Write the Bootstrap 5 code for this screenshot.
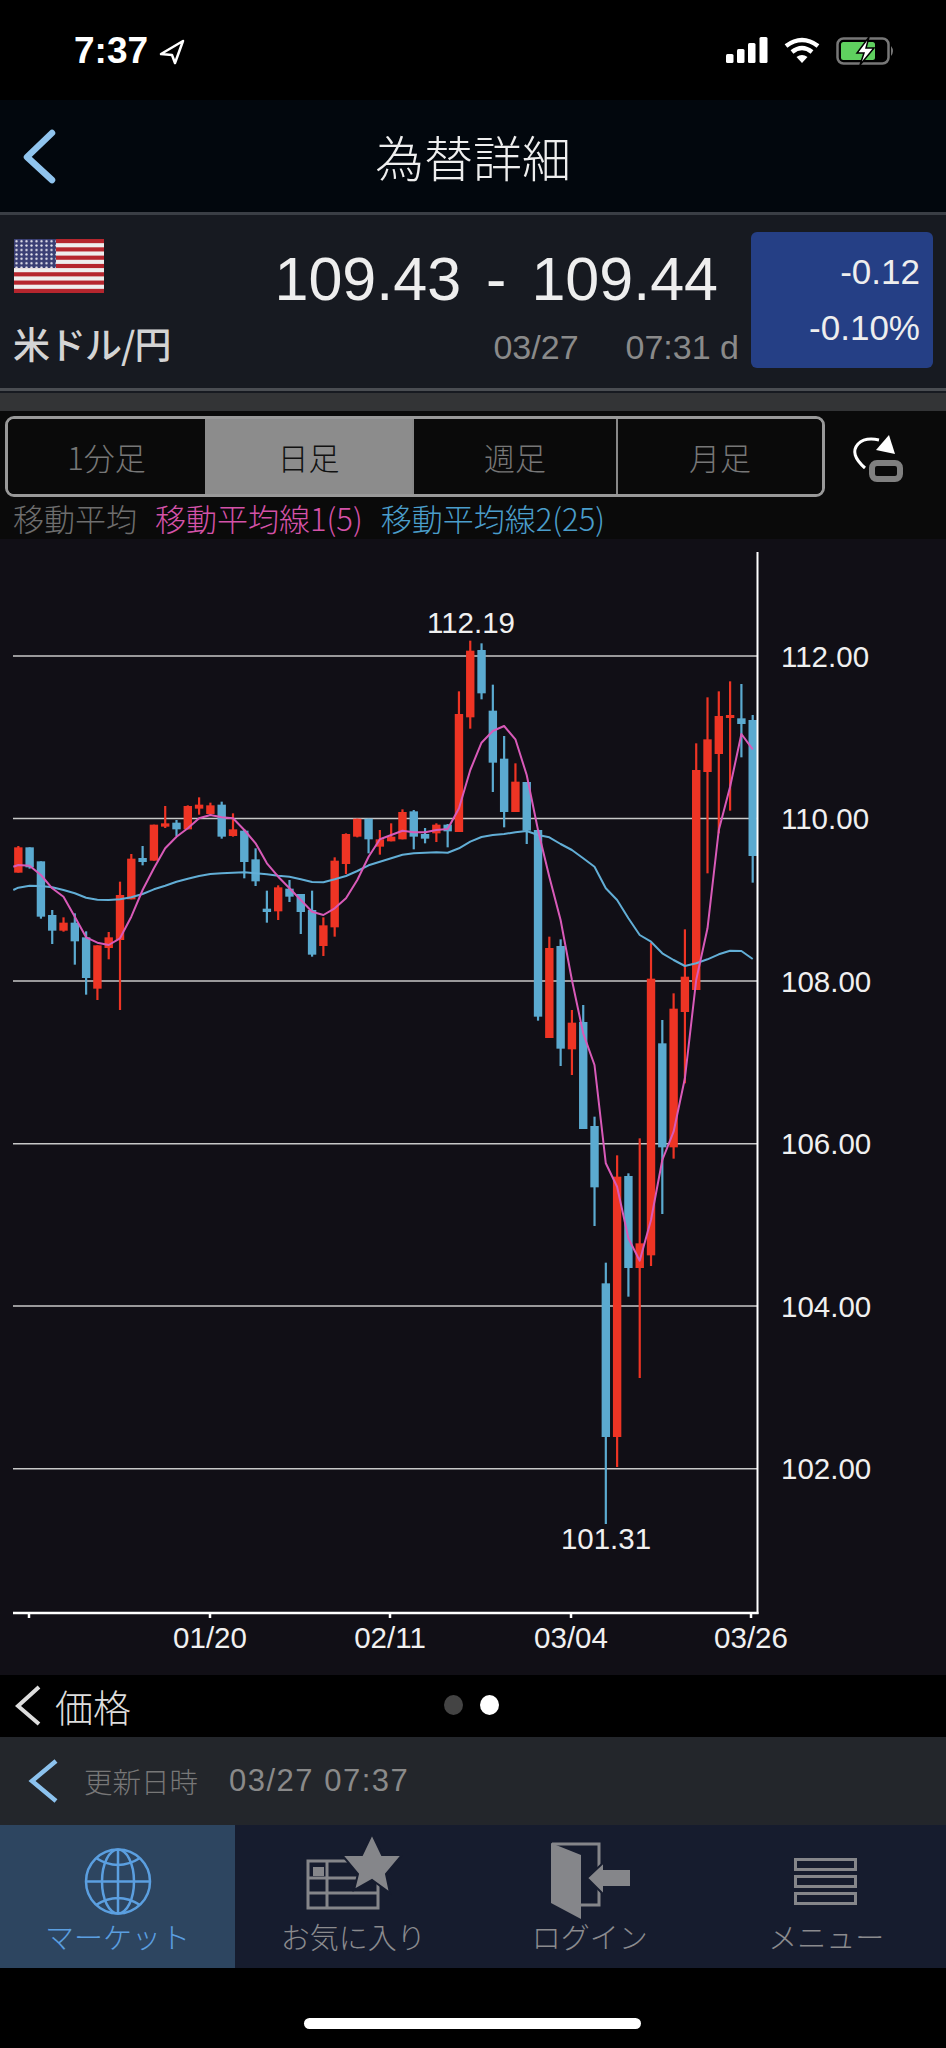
<!DOCTYPE html>
<html lang="ja">
<head>
    <meta charset="UTF-8">
    <meta name="viewport" content="width=device-width, initial-scale=1.0">
    <title>為替詳細</title>
    <link href="https://cdn.jsdelivr.net/npm/bootstrap@5.3.3/dist/css/bootstrap.min.css" rel="stylesheet">
    <script src="https://cdn.jsdelivr.net/npm/bootstrap@5.3.3/dist/js/bootstrap.bundle.min.js"></script>
    <style>
        html, body { background: #000; margin: 0; }
        body { width: 946px; height: 2048px; overflow: hidden; font-family: "Liberation Sans", "Noto Sans CJK JP", sans-serif; }
        svg { display: block; flex: none; }

        .status-bar { height: 100px; background: #000; padding: 37px 50px 0 74px; }
        .clock { font-size: 37px; line-height: 28px; font-weight: 700; color: #fff; }

        .title-bar { height: 115px; background: #02070d; border-bottom: 3px solid #3a3e45; padding-left: 21px; position: relative; }
        .page-title { position: absolute; left: 0; right: 0; top: 26px; text-align: center; font-size: 49px; line-height: 60px; color: #eee; font-weight: 300; font-family: "Noto Sans CJK JP", sans-serif; }

        .quote-row { height: 173px; background: #171a21; padding: 17px 13px 20px 14px; }
        .pair-col { width: 190px; }
        .pair-name { font-family: "Noto Sans CJK JP", sans-serif; font-size: 37px; line-height: 40px; font-weight: 500; color: #d4d4d4; margin-top: 30px; margin-left: -1px; white-space: nowrap; letter-spacing: -1px; }
        .flag-box { margin-top: 7px; }
        .price-line { font-size: 61px; line-height: 70px; color: #eee; margin-top: 12px; padding-right: 21px; gap: 25px; }
        .stamp-line { font-size: 34px; line-height: 40px; color: #8a8a8a; margin-top: 13px; gap: 47px; }
        .change-box { width: 182px; height: 136px; background: #253f85; border-radius: 6px; color: #eee; font-size: 35px; line-height: 56px; text-align: right; padding: 12px 13px 0 0; margin-left: 12px; }

        .rule-band { height: 23px; background: #333436; border-top: 3px solid #4a4d52; box-shadow: inset 0 2px 0 #171a21; }

        .tool-row { height: 128px; background: #0a0a0a; padding: 5px 0 0 5px; }
        .seg-wrap { display: grid; grid-template-columns: 197px 207px 204px 206px; width: 820px; height: 81px; border: 3px solid #999; border-radius: 9px; overflow: hidden; }
        .seg-btn { border: 0; border-radius: 0; padding: 0; background: #0a0a0a; color: #777; font-size: 31px; line-height: 1; font-family: "Noto Sans CJK JP", sans-serif; font-weight: 300; border-left: 2px solid #888; }
        .seg-btn:first-child { border-left: 0; }
        .seg-btn.picked { background: #8c8c8c; color: #111; border-left: 0; }
        .turn-icon { margin-left: 21px; }
        .legend-line { height: 42px; padding-left: 8px; gap: 18px; font-size: 31px; line-height: 40px; font-family: "Noto Sans CJK JP", sans-serif; font-weight: 300; white-space: nowrap; }
        .ma-grey { color: #6e6e6e; }
        .ma-pink { color: #d452a8; }
        .ma-blue { color: #4a9ecb; }

        .chart-box { height: 1136px; background: #110f16; }
        .axis-text { font-family: "Liberation Sans", sans-serif; font-size: 29.5px; fill: #f0f0f0; }

        .pager-row { height: 62px; background: #000; position: relative; padding-left: 15px; gap: 14px; }
        .pager-name { font-family: "Noto Sans CJK JP", sans-serif; font-size: 38px; line-height: 60px; color: #ddd; font-weight: 300; }
        .pager-dots { position: absolute; left: 444px; top: 20px; gap: 17px; }
        .pager-dots span { width: 19px; height: 20px; border-radius: 50%; background: #444; }
        .pager-dots span.now { background: #fff; }

        .update-row { height: 88px; background: #23262b; padding-left: 28px; }
        .update-label { font-family: "Noto Sans CJK JP", sans-serif; font-size: 28.5px; color: #777; font-weight: 300; margin-left: 26px; }
        .update-time { font-size: 31px; letter-spacing: 1.5px; color: #8a8a8a; margin-left: 31px; }

        .tab-bar { height: 143px; background: #161c2e; }
        .tab-item { width: 236.5px; height: 143px; padding-top: 3px; color: #8b8b8e; font-family: "Noto Sans CJK JP", sans-serif; font-size: 29px; line-height: 24px; font-weight: 300; white-space: nowrap; }
        .tab-item.picked { background: #2d4560; color: #5b9fe0; width: 235px; }

        .home-area { height: 80px; background: #000; padding-top: 50px; }
        .home-bar { width: 337px; height: 11px; border-radius: 6px; background: #fff; margin-left: 304px; }
    </style>
</head>
<body>
    <div class="status-bar d-flex justify-content-between">
        <div class="d-flex gap-2">
            <span class="clock">7:37</span>
            <svg width="30" height="28" viewBox="160 37 30 28" fill="none" stroke="#fff" stroke-width="2.5" stroke-linejoin="round"><path d="M187 41 L165 54 L176 55 L179 63 Z"/></svg>
        </div>
        <div class="d-flex gap-3">
            <svg width="42" height="27" viewBox="0 0 42 27" fill="#fff"><rect x="0" y="17" width="7.5" height="9" rx="1.5"/><rect x="11" y="12" width="7.5" height="14" rx="1.5"/><rect x="22" y="6" width="7.5" height="20" rx="1.5"/><rect x="33.5" y="0" width="8" height="26" rx="1.5"/></svg>
            <svg width="36" height="27" viewBox="0 0 36 27" fill="none" stroke="#fff" stroke-width="4.5"><path d="M2 9 Q18 -3 34 9"/><path d="M8 15 Q18 7 28 15"/><path d="M18 26 L12.5 20 Q18 16 23.5 20 Z" fill="#fff" stroke="none"/></svg>
            <svg width="60" height="28" viewBox="0 0 60 28"><rect x="1.5" y="1.5" width="51" height="25" rx="6" fill="none" stroke="#777" stroke-width="2.5"/><rect x="5" y="5" width="34" height="18" rx="2.5" fill="#5fd05f"/><path d="M55 9 Q59 14 55 19 Z" fill="#777"/><path d="M33 0 L21 16 L28 16 L24 28 L38 11 L30 11 Z" fill="#fff" stroke="#000" stroke-width="1.5"/></svg>
        </div>
    </div>

    <div class="title-bar d-flex align-items-start">
        <svg class="mt-4" width="36" height="60" viewBox="20 124 36 60" fill="none" stroke="#90c4ee" stroke-width="6.5" stroke-linecap="round" stroke-linejoin="round"><path d="M51 133 L26 157 L51 180"/></svg>
        <div class="page-title">為替詳細</div>
    </div>

    <div class="quote-row d-flex">
        <div class="pair-col">
            <svg class="flag-box" width="90" height="54" viewBox="0 0 90 54">
                <defs><pattern id="starDots" width="5" height="4.4" patternUnits="userSpaceOnUse"><circle cx="2.5" cy="2.2" r="1.2" fill="#e8e8f0"/></pattern></defs>
                <rect width="90" height="54" fill="#eee"/>
                <g id="flagStripes" fill="#b5262e"></g>
                <rect width="42" height="29" fill="#3a3f74"/>
                <rect width="42" height="29" fill="url(#starDots)"/>
            </svg>
            <div class="pair-name">米ドル/円</div>
        </div>
        <div class="flex-grow-1 text-end">
            <div class="price-line d-flex justify-content-end"><span>109.43</span><span>-</span><span>109.44</span></div>
            <div class="stamp-line d-flex justify-content-end"><span>03/27</span><span>07:31 d</span></div>
        </div>
        <div class="change-box"><div>-0.12</div><div>-0.10%</div></div>
    </div>

    <div class="rule-band"></div>

    <div class="tool-row">
        <div class="d-flex align-items-center">
            <div class="seg-wrap">
                <button type="button" class="btn seg-btn">1分足</button>
                <button type="button" class="btn seg-btn picked">日足</button>
                <button type="button" class="btn seg-btn">週足</button>
                <button type="button" class="btn seg-btn">月足</button>
            </div>
            <svg class="turn-icon" width="62" height="54" viewBox="850 428 62 54" fill="none">
                <path d="M869 466 Q853 452 862 442 Q869 435 883 438" stroke="#fff" stroke-width="3"/>
                <path d="M893 433 L880 448 L899 452 Z" fill="#fff"/>
                <rect x="876" y="461" width="28" height="16" rx="5" stroke="#808080" stroke-width="6"/>
            </svg>
        </div>
        <div class="legend-line d-flex align-items-center">
            <span class="ma-grey">移動平均</span>
            <span class="ma-pink">移動平均線1(5)</span>
            <span class="ma-blue">移動平均線2(25)</span>
        </div>
    </div>

    <div class="chart-box">
        <svg id="chart" width="946" height="1136" viewBox="0 539 946 1136"></svg>
    </div>

    <div class="pager-row d-flex align-items-center">
        <svg width="26" height="42" viewBox="14 1684 26 42" fill="none" stroke="#ddd" stroke-width="4"><path d="M38 1686 L17 1705 L38 1723"/></svg>
        <span class="pager-name">価格</span>
        <div class="pager-dots d-flex"><span></span><span class="now"></span></div>
    </div>

    <div class="update-row d-flex align-items-center">
        <svg width="30" height="48" viewBox="28 1756 30 48" fill="none" stroke="#8cc2ee" stroke-width="4.5"><path d="M56 1760 L32 1780 L56 1800"/></svg>
        <span class="update-label">更新日時</span>
        <span class="update-time">03/27 07:37</span>
    </div>

    <div class="tab-bar d-flex">
        <div class="tab-item picked d-flex flex-column align-items-center">
            <svg width="100" height="96" viewBox="68 1828 100 96" fill="none" stroke="#5b9fe0" stroke-width="2.5">
                <ellipse cx="118" cy="1881.5" rx="32" ry="32"/>
                <ellipse cx="118" cy="1881.5" rx="16" ry="32"/>
                <path d="M118 1849 V1914 M86 1881.5 H150 M96 1858 Q118 1872 140 1858 M96 1905 Q118 1891 140 1905"/>
            </svg>
            <span>マーケット</span>
        </div>
        <div class="tab-item d-flex flex-column align-items-center">
            <svg width="100" height="96" viewBox="305 1828 100 96">
                <g fill="none" stroke="#85868a" stroke-width="3">
                    <path d="M310 1861 H380 V1908 H310 Z M310 1878 H360 M310 1893 H380 M329 1861 V1908"/>
                </g>
                <rect x="315" y="1867" width="11" height="9" fill="#85868a"/>
                <path d="M374 1834 L384 1855 L404 1855 L388 1874 L392 1893 L374 1880 L356 1890 L360 1874 L344 1855 L364 1855 Z" fill="#85868a" stroke="#161c2e" stroke-width="2"/>
            </svg>
            <span>お気に入り</span>
        </div>
        <div class="tab-item d-flex flex-column align-items-center">
            <svg width="100" height="96" viewBox="541 1828 100 96">
                <path d="M553 1844 H600 V1905 H580" fill="none" stroke="#85868a" stroke-width="3"/>
                <path d="M552 1843 L582 1855 L582 1919 L552 1903 Z" fill="#85868a"/>
                <path d="M588 1878 L605 1862 L605 1869 L632 1869 L632 1887 L605 1887 L605 1895 Z" fill="#85868a" stroke="#161c2e" stroke-width="2"/>
            </svg>
            <span>ログイン</span>
        </div>
        <div class="tab-item d-flex flex-column align-items-center">
            <svg width="100" height="96" viewBox="778 1828 100 96" fill="none" stroke="#85868a" stroke-width="3">
                <rect x="797.5" y="1859.5" width="60" height="10"/>
                <rect x="797.5" y="1876.5" width="60" height="10"/>
                <rect x="797.5" y="1893.5" width="60" height="10"/>
            </svg>
            <span>メニュー</span>
        </div>
    </div>

    <div class="home-area"><div class="home-bar"></div></div>

    <script>
        document.addEventListener("DOMContentLoaded", () => {
            const NS = "http://www.w3.org/2000/svg";
            const chart = document.getElementById("chart");
            const RED = "#ee3424", BLUE = "#5baad0";

            function add(parent, tag, attrs, text) {
                const el = document.createElementNS(NS, tag);
                Object.entries(attrs).forEach(([k, v]) => el.setAttribute(k, v));
                if (text) el.textContent = text;
                parent.appendChild(el);
                return el;
            }

            // flag stripes
            const stripes = document.getElementById("flagStripes");
            for (let i = 0; i < 13; i += 2) add(stripes, "rect", { x: 0, y: i * 54 / 13, width: 90, height: 54 / 13 });

            // measurements were read off a 3x crop: real y = 600 + z / 3
            const Y = z => 600 + z / 3;
            const X = i => 18.33 + 11.298 * i;

            // r/b, wick top, body top, body bottom, wick bottom
            const candles = [
                ["r",738,742,818,818],["b",742,742,802,806],["b",784,784,950,956],["b",930,945,992,1032],["r",952,968,992,995],
                ["b",940,968,1024,1094],["b",994,1012,1134,1184],["r",1036,1036,1166,1200],["r",996,1012,1044,1078],["r",845,885,1020,1230],
                ["r",762,776,898,898],["b",738,774,786,796],["r",674,674,782,782],["r",618,670,680,684],["b",660,668,688,708],
                ["r",616,618,688,688],["r",592,614,626,644],["r",608,616,642,644],["b",605,614,710,716],["r",640,688,708,710],
                ["b",688,692,786,835],["b",745,778,844,858],["b",872,926,936,968],["r",856,862,934,960],["b",840,866,890,906],
                ["b",882,882,936,1002],["b",872,930,1064,1070],["r",952,976,1038,1068],["r",772,782,982,1010],["r",700,702,792,822],
                ["r",656,656,710,712],["b",656,656,718,760],["r",690,718,740,764],["r",670,710,724,724],["r",628,636,718,718],
                ["b",630,634,710,748],["b",684,702,716,730],["r",670,674,700,726],["b",672,674,694,742],["r",274,342,696,696],
                ["r",122,152,352,386],["b",130,150,280,298],["b",254,332,488,576],["b",408,476,636,682],["r",490,545,636,636],
                ["b",546,546,692,732],["b",688,690,1250,1262],["r",1010,1044,1314,1314],["b",1018,1038,1346,1398],["r",1230,1268,1348,1425],
                ["b",1215,1266,1587,1587],["b",1550,1578,1762,1878],["b",1988,2050,2511,2772],["r",1666,1730,2511,2601],["b",1720,1728,2004,2090],
                ["r",1615,1930,2004,2334],["r",1028,1136,1966,1998],["b",1260,1330,1642,1842],["r",1180,1226,1642,1676],["r",988,1130,1236,1450],
                ["r",430,510,1170,1170],["r",292,418,516,820],["r",274,348,462,700],["r",244,345,354,632],["b",252,355,372,472],
                ["b",345,360,768,848]
            ];

            const ma5 = [795,797,825,865,890,950,1012,1028,1035,1015,950,870,805,745,710,685,655,645,652,655,690,730,790,830,865,900,935,945,925,895,840,770,718,705,692,697,697,690,687,625,510,428,393,378,418,525,690,830,960,1140,1300,1395,1690,1760,1915,1982,1860,1680,1595,1435,1140,985,690,560,402,448];
            const ma25 = [863,857,858,862,870,880,893,899,900,898,892,882,868,857,845,836,828,822,820,818,817,820,823,827,830,838,846,847,838,828,813,796,785,775,764,760,758,757,758,745,725,711,705,702,697,693,705,712,732,750,775,800,865,900,955,1005,1025,1060,1080,1098,1090,1078,1063,1052,1053,1077];

            // grid lines and their price labels
            [["112.00",656],["110.00",818.6],["108.00",981],["106.00",1143.7],["104.00",1306],["102.00",1468.7]].forEach(([label, y]) => {
                add(chart, "line", { x1: 13, x2: 757, y1: y, y2: y, stroke: "#c8c8c8", "stroke-width": 1.5 });
                add(chart, "text", { x: 781, y: y + 10.5, class: "axis-text" }, label);
            });

            candles.forEach((c, i) => {
                const color = c[0] === "r" ? RED : BLUE;
                const x = X(i);
                add(chart, "rect", { x: x - 1.1, y: Y(c[1]), width: 2.2, height: (c[4] - c[1]) / 3, fill: color });
                const w = i === 65 ? 4.3 + 4.1 : 8.4;
                add(chart, "rect", { x: x - 4.2, y: Y(c[2]), width: w, height: Math.max((c[3] - c[2]) / 3, 2), fill: color });
            });

            const poly = (vals, color, first) => {
                const pts = vals.map((z, i) => `${X(i).toFixed(1)},${Y(z).toFixed(1)}`);
                pts.unshift(`13.3,${Y(first).toFixed(1)}`);
                add(chart, "polyline", { points: pts.join(" "), fill: "none", stroke: color, "stroke-width": 2, "stroke-linejoin": "round" });
            };
            poly(ma25, "#62aed6", 870);
            poly(ma5, "#d85ab8", 800);

            // axes
            add(chart, "line", { x1: 757.5, x2: 757.5, y1: 552, y2: 1614, stroke: "#fff", "stroke-width": 2 });
            add(chart, "line", { x1: 13, x2: 758.5, y1: 1613, y2: 1613, stroke: "#fff", "stroke-width": 2.5 });
            [[29, ""], [210, "01/20"], [390, "02/11"], [571, "03/04"], [751, "03/26"]].forEach(([x, label]) => {
                add(chart, "line", { x1: x, x2: x, y1: 1613, y2: 1618, stroke: "#fff", "stroke-width": 2.5 });
                if (label) add(chart, "text", { x: x, y: 1648, "text-anchor": "middle", class: "axis-text" }, label);
            });

            add(chart, "text", { x: 471, y: 633, "text-anchor": "middle", class: "axis-text" }, "112.19");
            add(chart, "text", { x: 606, y: 1549, "text-anchor": "middle", class: "axis-text" }, "101.31");
        });
    </script>
</body>
</html>
